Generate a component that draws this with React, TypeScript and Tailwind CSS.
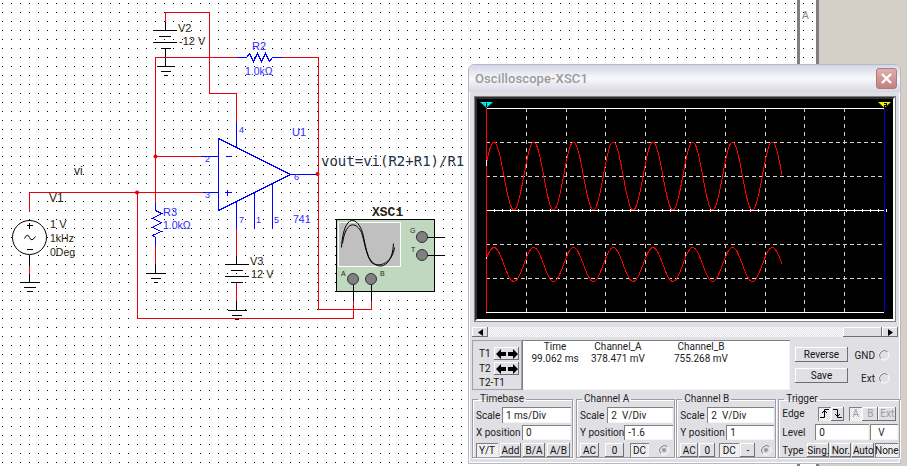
const sans = "font-['Liberation_Sans',Arial,sans-serif]";
const ui = "font-['Roboto',sans-serif]";

const raised = "shadow-[inset_-1px_-1px_0_#707070,inset_1px_1px_0_#ffffff]";
const sunken = "shadow-[inset_1px_1px_0_#808080,inset_-1px_-1px_0_#f4f4f4]";
const dither =
  "bg-[repeating-conic-gradient(#ffffff_0_25%,#e0dfe3_0_50%)] bg-[length:2px_2px]";

function wave(center: number, amp: number) {
  const pts: string[] = [];
  for (let x = 486; x <= 782; x += 1) {
    const y = center - amp * Math.cos(((x - 494) * 2 * Math.PI) / 39.75);
    pts.push(`${x},${y.toFixed(1)}`);
  }
  return pts.join(" ");
}

const redWires = [
  "M165 21V12H209V93H236V121",
  "M155 202V57H236",
  "M281 57H318V309H371V300",
  "M155 156H200",
  "M29 211V192H202",
  "M137 192V318H353V300",
  "M155 245V263",
  "M236 228V255",
  "M236 282V300",
  "M29 265V273",
];
const blueWires = [
  "M236 121V147",
  "M236 57H246L249 53L253 61L257 53L261 61L265 53L269 61L272 57H281",
  "M200 156H218",
  "M202 192H218",
  "M218 138V210L290 174Z",
  "M290 174H317",
  "M236 201V228",
  "M254 192V228",
  "M272 183V228",
  "M155 202V210L161 213L152 218L161 222L152 227L161 231L152 235L155 237V245",
  "M225 156H231",
  "M224 192H231M227 189V195",
];
const blackWires = [
  "M165 21V30M152 30H176M158 36H170M152 42H176M160 48H170M165 48V66",
  "M156 66H174M160 71H170M163 75H167",
  "M29 219V220M29 254V265M29 273V282",
  "M20 282H39M23 287H35M26 291H32",
  "M155 263V273M146 273H165M150 278H160M153 282H157",
  "M236 255V264M224 264H248M230 270H242M224 276H248M230 282H242M236 282V282M236 300V310",
  "M227 310H246M231 315H241M234 319H238",
  "M26 225H32M29 222V228M26 249H32",
  "M353 279V300M371 279V300M422 237H444M422 255H444",
];

function Schematic() {
  const label = (x: number, y: number, t: string, color: string, size = 11) => (
    <text x={x} y={y} fill={color} fontSize={size}>
      {t}
    </text>
  );
  const dark = "#2a2510";
  const blue = "#2a2aff";
  return (
    <svg width="797" height="466" className={`shrink-0 ${sans}`}>
      <defs>
        <pattern id="dots" width="9" height="9" patternUnits="userSpaceOnUse">
          <rect x="2" y="3" width="1" height="1" fill="#000" />
        </pattern>
      </defs>
      <rect width="797" height="466" fill="url(#dots)" shapeRendering="crispEdges" />
      <rect x="336.5" y="219.5" width="98" height="72" fill="#c0d8c0" stroke="#000" shapeRendering="crispEdges" />
      <rect x="338.5" y="222.5" width="62" height="44" fill="#c0c0c0" stroke="#fff" shapeRendering="crispEdges" />
      <g transform="translate(0.5 0.5)" fill="none" shapeRendering="crispEdges">
        <circle cx="29" cy="237" r="17" stroke="#000" fill="#fff" shapeRendering="auto" />
        {blackWires.map((d) => (
          <path key={d} d={d} stroke="#000" />
        ))}
        {redWires.map((d) => (
          <path key={d} d={d} stroke="#e8000c" />
        ))}
        {blueWires.map((d) => (
          <path key={d} d={d} stroke="#0000ff" />
        ))}
        <path d="M24 238Q27 232 29 237T35 236" stroke="#000" shapeRendering="auto" />
        <path
          d="M341 247C343 214 356 214 362 232C364 240 365 248 368 256C376 272 392 268 393 243"
          stroke="#000"
          shapeRendering="auto"
        />
        <path
          d="M342 243C345 221 355 220 361 232C364 240 365 254 371 262C379 268 392 262 394 247"
          stroke="#000"
          shapeRendering="auto"
        />
      </g>
      <circle cx="155.5" cy="156.5" r="2" fill="#e8000c" />
      <circle cx="137" cy="192.5" r="2" fill="#e8000c" />
      <circle cx="317.5" cy="174" r="2" fill="#e8000c" />
      {[
        [422, 237],
        [422, 255],
        [353, 279],
        [371, 279],
      ].map(([cx, cy]) => (
        <circle key={`${cx}-${cy}`} cx={cx} cy={cy} r="5.5" fill="#808080" stroke="#333" />
      ))}

      {label(178, 32, "V2", dark)}
      {label(179, 45, "-12 V", dark)}
      {label(252, 50, "R2", blue)}
      {label(245, 75, "1.0kΩ", blue, 10.5)}
      {label(292, 136, "U1", blue)}
      {label(74, 175, "vi", dark, 12)}
      {label(49, 202, "V1", dark, 12)}
      {label(50, 228, "1 V", dark)}
      {label(50, 242, "1kHz", dark, 10.5)}
      {label(50, 256, "0Deg", dark, 10.5)}
      {label(163, 216, "R3", blue)}
      {label(163, 229, "1.0kΩ", blue, 10.5)}
      {label(250, 265, "V3", dark)}
      {label(251, 278, "12 V", dark)}
      {label(239, 133, "4", blue, 9)}
      {label(205, 162, "2", blue, 9)}
      {label(205, 198, "3", blue, 9)}
      {label(294, 180, "6", blue, 9)}
      {label(239, 223, "7", blue, 9)}
      {label(256, 223, "1", blue, 9)}
      {label(274, 223, "5", blue, 9)}
      {label(293, 223, "741", blue, 10.5)}
      {label(410, 233, "G", dark, 7)}
      {label(411, 252, "T", dark, 7)}
      {label(341, 276, "A", dark, 7)}
      {label(380, 276, "B", dark, 7)}
      <text x="372" y="216" fontSize="13" fontWeight="700" fill={dark} className="font-['Liberation_Mono',monospace]">
        XSC1
      </text>
      <text x="321" y="166" fontSize="14" fill="#23324a" className="font-['DejaVu_Sans_Mono',monospace]">
        vout=vi(R2+R1)/R1
      </text>
    </svg>
  );
}

function Plot() {
  const vertical = [526, 566, 605, 645, 685, 725, 765, 804, 844];
  const horizontal = [142, 176, 244, 278];
  const ticks: number[] = [];
  for (let x = 486; x < 884; x += 8) ticks.push(x);
  return (
    <svg viewBox="477 99 416 220" width="416" height="220" className="block bg-black">
      <g shapeRendering="crispEdges" fill="none">
        {vertical.map((x) => (
          <path key={x} d={`M${x}.5 108V312`} stroke="#d0d0d0" strokeDasharray="4 4" />
        ))}
        {horizontal.map((y) => (
          <path key={y} d={`M486 ${y}.5H884`} stroke="#d0d0d0" strokeDasharray="4 3" />
        ))}
        <path d="M486 108.5H884M486 312.5H884M486 210.5H884" stroke="#fff" />
        {ticks.map((x) => (
          <path key={x} d={`M${x + 8}.5 209V212`} stroke="#fff" />
        ))}
        <polyline points={wave(176, 34)} stroke="#ff0000" />
        <polyline points={wave(264.5, 17)} stroke="#ff0000" />
        <path d="M486.5 108V312" stroke="#ff0000" />
        <path d="M884.5 108V312" stroke="#0000c8" />
        <path d="M486.5 160V166M486.5 257V259" stroke="#fff" />
      </g>
      <polygon points="480,102 493,102 486.5,108" fill="#00e8e8" />
      <polygon points="878,102 891,102 884.5,108" fill="#f0f000" />
      <path d="M486.5 103V107" stroke="#000" shapeRendering="crispEdges" />
      <path d="M884 103H886V105H884V107H886" stroke="#000" fill="none" shapeRendering="crispEdges" />
    </svg>
  );
}

function Btn({
  children,
  className,
  pressed,
  disabled,
}: {
  children: React.ReactNode;
  className: string;
  pressed?: boolean;
  disabled?: boolean;
}) {
  return (
    <div
      className={`flex shrink-0 items-center justify-center ${className} ${
        pressed ? `${sunken} ${dither}` : raised
      } ${disabled ? "text-[#9a9aa0]" : "text-[#111]"}`}
    >
      {children}
    </div>
  );
}

function Field({ value, className }: { value: string; className: string }) {
  return (
    <div className={`flex shrink-0 items-center whitespace-pre bg-white pl-1 text-[#222] ${sunken} ${className}`}>
      {value}
    </div>
  );
}

function Radio({ dot }: { dot?: boolean }) {
  return (
    <svg width="12" height="12" viewBox="0 0 12 12" className="shrink-0">
      <circle cx="6" cy="6" r="5" fill="#e0dfe3" stroke="#fff" />
      <path d="M2.5 9.5A5 5 0 0 1 9.5 2.5" stroke="#808080" fill="none" />
      {dot && <circle cx="6" cy="6" r="2" fill="#9a9a9a" />}
    </svg>
  );
}

function Arrows() {
  return (
    <svg width="22" height="10" viewBox="0 0 22 10">
      <path d="M0 5L5 0V3H10V7H5V10Z" fill="#000" />
      <path d="M22 5L17 0V3H12V7H17V10Z" fill="#000" />
    </svg>
  );
}

function Group({
  title,
  className,
  children,
}: {
  title: string;
  className: string;
  children: React.ReactNode;
}) {
  return (
    <fieldset
      className={`h-[65px] shrink-0 whitespace-nowrap border border-[#9c9ca4] shadow-[1px_1px_0_#fff,inset_1px_1px_0_#fff] ${className}`}
    >
      <legend className="ml-[2px] h-[12px] px-[2px] leading-[12px] text-[#222]">{title}</legend>
      {children}
    </fieldset>
  );
}

function ScopeWindow() {
  return (
    <div
      className={`absolute left-[468px] top-[64px] flex h-[400px] w-[433px] flex-col rounded-t-[6px] border border-[#b4b8c8] bg-[#e0dfe3] text-[10px] shadow-[inset_1px_0_0_#fff,inset_-1px_0_0_#fff,inset_0_-1px_0_#fff] ${ui}`}
    >
      <div className="flex h-[27px] shrink-0 items-center justify-between rounded-t-[5px] bg-gradient-to-b from-[#d4d6e4] via-[#f8f8fb] to-[#d8d8e4] pl-[6px] pr-[3px]">
        <span className="text-[13px] font-medium tracking-[0.1px] text-[#9a9a9a]">Oscilloscope-XSC1</span>
        <div className="flex h-[21px] w-[21px] items-center justify-center rounded-[3px] border border-[#a87c7c] bg-gradient-to-b from-[#dcb0b0] to-[#c58080]">
          <svg width="13" height="13" viewBox="0 0 13 13">
            <path d="M2 2L11 11M11 2L2 11" stroke="#fff" strokeWidth="2.4" />
          </svg>
        </div>
      </div>

      <div className="mx-[5px] mt-[4px] w-[422px] border border-[#808080]">
        <div className="border-2 border-b-white border-l-[#303030] border-r-white border-t-[#303030]">
          <Plot />
        </div>
      </div>

      <div className="ml-[3px] mt-[5px] flex h-[10px] w-[426px] items-stretch">
        <Btn className="w-[16px]">
          <svg width="5" height="7" viewBox="0 0 5 7">
            <path d="M0 3.5L5 0V7Z" fill="#000" />
          </svg>
        </Btn>
        <div className={`flex-1 ${dither}`} />
        <Btn className="w-[39px]">{""}</Btn>
        <Btn className="w-[16px]">
          <svg width="5" height="7" viewBox="0 0 5 7">
            <path d="M5 3.5L0 0V7Z" fill="#000" />
          </svg>
        </Btn>
      </div>

      <div className="ml-[3px] mt-[3px] flex h-[50px] items-stretch">
        <div className="relative w-[50px] shrink-0 border border-[#a0a0a8] pl-[6px] pt-[6px] text-[#111]">
          <div className="flex h-[13px] items-center justify-between pr-[2px]">
            T1
            <Btn className="h-[13px] w-[25px]">
              <Arrows />
            </Btn>
          </div>
          <div className="mt-[2px] flex h-[13px] items-center justify-between pr-[2px]">
            T2
            <Btn className="h-[13px] w-[25px]">
              <Arrows />
            </Btn>
          </div>
          <div className="mt-[2px] leading-[12px]">T2-T1</div>
        </div>
        <div className={`flex w-[268px] shrink-0 bg-white pt-px leading-[12px] text-[#222] ${sunken}`}>
          <div className="w-[66px] text-center">
            <div>Time</div>
            <div>99.062 ms</div>
          </div>
          <div className="w-[60px] text-center">
            <div>Channel_A</div>
            <div>378.471 mV</div>
          </div>
          <div className="w-[106px] text-center">
            <div>Channel_B</div>
            <div>755.268 mV</div>
          </div>
        </div>
        <div className="ml-[5px] flex flex-col gap-[6px] pt-[7px]">
          <Btn className="h-[15px] w-[53px]">Reverse</Btn>
          <Btn className="h-[15px] w-[53px]">Save</Btn>
        </div>
        <div className="ml-[6px] flex flex-col gap-[9px] pt-[8px] text-[#222]">
          <div className="flex h-[14px] w-[36px] items-center justify-end gap-[3px]">
            GND <Radio />
          </div>
          <div className="flex h-[14px] w-[36px] items-center justify-end gap-[3px]">
            Ext <Radio />
          </div>
        </div>
      </div>

      <div className="ml-[3px] mt-[3px] flex gap-[3px] text-[#222]">
        <Group title="Timebase" className="w-[101px] pl-[3px]">
          <div className="mt-[2px] flex h-[16px] items-center justify-between pr-[1px]">
            Scale
            <Field value="1 ms/Div" className="h-[16px] w-[69px]" />
          </div>
          <div className="mt-[2px] flex h-[15px] items-center justify-between pr-[1px]">
            X position
            <Field value="0" className="h-[15px] w-[49px]" />
          </div>
          <div className="mt-[3px] flex h-[14px] gap-[2px]">
            <Btn className="w-[22px]" pressed>Y/T</Btn>
            <Btn className="w-[21px]">Add</Btn>
            <Btn className="w-[22px]">B/A</Btn>
            <Btn className="w-[23px]">A/B</Btn>
          </div>
        </Group>
        <Group title="Channel A" className="w-[96px] pl-[3px]">
          <div className="mt-[2px] flex h-[16px] items-center justify-between pr-[1px]">
            Scale
            <Field value="2  V/Div" className="h-[16px] w-[66px]" />
          </div>
          <div className="mt-[2px] flex h-[15px] items-center justify-between pr-[1px]">
            Y position
            <Field value="-1.6" className="h-[15px] w-[49px]" />
          </div>
          <div className="mt-[3px] flex h-[14px] items-center gap-[6px]">
            <Btn className="h-[14px] w-[19px]">AC</Btn>
            <Btn className="h-[14px] w-[19px]">0</Btn>
            <Btn className="h-[14px] w-[19px]" pressed>DC</Btn>
            <div className="ml-[3px]">
              <Radio dot />
            </div>
          </div>
        </Group>
        <Group title="Channel B" className="-ml-[2px] w-[100px] pl-[3px]">
          <div className="mt-[2px] flex h-[16px] items-center justify-between pr-[1px]">
            Scale
            <Field value="2  V/Div" className="h-[16px] w-[67px]" />
          </div>
          <div className="mt-[2px] flex h-[15px] items-center justify-between pr-[1px]">
            Y position
            <Field value="1" className="h-[15px] w-[48px]" />
          </div>
          <div className="mt-[3px] flex h-[14px] items-center gap-[1px]">
            <Btn className="h-[14px] w-[18px]">AC</Btn>
            <Btn className="h-[14px] w-[16px]">0</Btn>
            <Btn className="ml-[3px] h-[14px] w-[20px]" pressed>DC</Btn>
            <Btn className="h-[14px] w-[15px]">-</Btn>
            <div className="ml-[4px]">
              <Radio dot />
            </div>
          </div>
        </Group>
        <Group title="Trigger" className="-ml-[1px] w-[122px] pl-[3px]">
          <div className="mt-px flex h-[15px] items-center">
            <span className="w-[36px]">Edge</span>
            <Btn className="h-[14px] w-[13px]" pressed>
              <svg width="9" height="9" viewBox="0 0 9 9">
                <path d="M0 8.5H4.5V0.5H9M2 4L4.5 1.5L7 4" stroke="#000" fill="none" />
              </svg>
            </Btn>
            <Btn className="h-[14px] w-[13px]">
              <svg width="9" height="9" viewBox="0 0 9 9">
                <path d="M0 0.5H4.5V8.5H9M2 5L4.5 7.5L7 5" stroke="#000" fill="none" />
              </svg>
            </Btn>
            <Btn className="ml-[5px] h-[14px] w-[13px]" pressed disabled>A</Btn>
            <Btn className="h-[14px] w-[16px]" disabled>B</Btn>
            <Btn className="h-[14px] w-[18px]" disabled>Ext</Btn>
          </div>
          <div className="mt-[3px] flex h-[16px] items-center">
            <span className="w-[33px]">Level</span>
            <Field value="0" className="h-[16px] w-[54px]" />
            <Field value="V" className="ml-px h-[16px] w-[28px] pl-[8px]" />
          </div>
          <div className="mt-[3px] flex h-[14px] items-center gap-px">
            <span className="w-[24px]">Type</span>
            <Btn className="h-[14px] w-[22px]">Sing.</Btn>
            <Btn className="h-[14px] w-[21px]">Nor.</Btn>
            <Btn className="h-[14px] w-[22px]">Auto</Btn>
            <Btn className="h-[14px] w-[23px]" pressed>None</Btn>
          </div>
        </Group>
      </div>
    </div>
  );
}

export default function App() {
  return (
    <div className="relative flex h-[466px] w-[907px] overflow-hidden bg-white">
      <Schematic />
      <div className={`relative h-full w-[22px] shrink-0 border-x-[3px] border-[#808080] ${sans}`}>
        <svg width="16" height="466" className="block">
          <defs>
            <pattern id="stripDots" width="9" height="9" patternUnits="userSpaceOnUse" patternTransform="translate(1 0)">
              <rect x="2" y="3" width="1" height="1" fill="#000" />
            </pattern>
          </defs>
          <rect width="16" height="466" fill="url(#stripDots)" shapeRendering="crispEdges" />
          <text x="2" y="19" fontSize="10" fill="#7088a0">
            A
          </text>
        </svg>
      </div>
      <div className="flex-1 bg-[#d4d0c8]" />
      <ScopeWindow />
    </div>
  );
}
